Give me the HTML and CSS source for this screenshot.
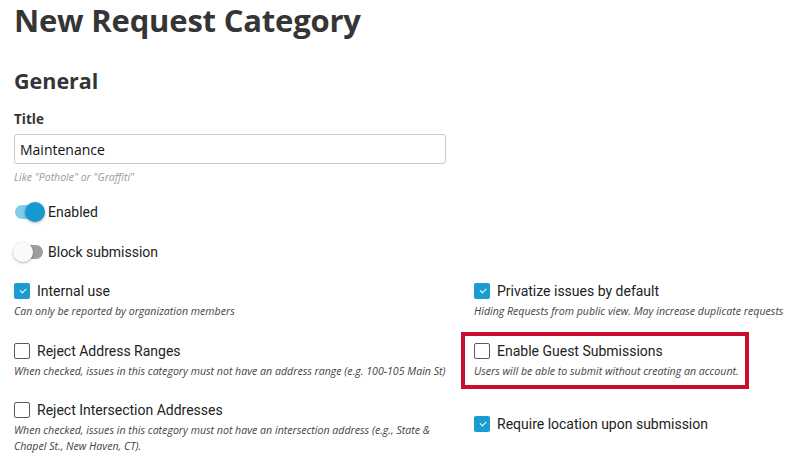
FILE: index.html
```html
<!DOCTYPE html>
<html lang="en">
<head>
<meta charset="utf-8">
<title>New Request Category</title>
<link rel="stylesheet" href="styles.css">
</head>
<body>
<main class="page">
  <h1 class="page-title">New Request Category</h1>
  <h2 class="section-title">General</h2>

  <div class="field">
    <label class="field-label" for="title">Title</label>
    <input id="title" class="text-input" type="text" value="Maintenance">
    <p class="field-hint">Like "Pothole" or "Graffiti"</p>
  </div>

  <div class="switch-row first">
    <span class="switch on"><span class="track"></span><span class="thumb"></span></span>
    <span class="switch-label">Enabled</span>
  </div>
  <div class="switch-row">
    <span class="switch"><span class="track"></span><span class="thumb"></span></span>
    <span class="switch-label">Block submission</span>
  </div>

  <div class="options">
    <div class="col col-left">
      <div class="option">
        <div class="check-row"><span class="box checked"></span><span class="check-label">Internal use</span></div>
        <p class="help">Can only be reported by organization members</p>
      </div>
      <div class="option">
        <div class="check-row"><span class="box"></span><span class="check-label">Reject Address Ranges</span></div>
        <p class="help">When checked, issues in this category must not have an address range (e.g. 100-105 Main St)</p>
      </div>
      <div class="option">
        <div class="check-row"><span class="box"></span><span class="check-label">Reject Intersection Addresses</span></div>
        <p class="help narrow">When checked, issues in this category must not have an intersection address (e.g., State &amp; Chapel St., New Haven, CT).</p>
      </div>
    </div>
    <div class="col col-right">
      <div class="option">
        <div class="check-row"><span class="box checked"></span><span class="check-label">Privatize issues by default</span></div>
        <p class="help">Hiding Requests from public view. May increase duplicate requests</p>
      </div>
      <div class="option highlighted">
        <div class="check-row"><span class="box"></span><span class="check-label">Enable Guest Submissions</span></div>
        <p class="help">Users will be able to submit without creating an account.</p>
      </div>
      <div class="option spaced">
        <div class="check-row"><span class="box checked"></span><span class="check-label">Require location upon submission</span></div>
      </div>
    </div>
  </div>
</main>
</body>
</html>
```
FILE: styles.css
```css
* { box-sizing: border-box; }
html, body { margin: 0; padding: 0; background: #fff; }
body { font-family: "Open Sans", "Noto Sans", sans-serif; color: #333; }

.page { padding: 0 14px; width: 801px; }

.page-title {
  margin: 0;
  font-size: 31px;
  line-height: 40px;
  font-weight: 700;
  color: #353535;
  letter-spacing: -0.2px;
}

.section-title {
  margin: 26px 0 0;
  font-size: 21.5px;
  line-height: 30px;
  font-weight: 700;
  color: #353535;
}

.field { margin-top: 13px; }
.field-label {
  display: block;
  font-size: 13.5px;
  line-height: 20px;
  font-weight: 700;
  color: #333;
}
.text-input {
  display: block;
  margin-top: 5px;
  width: 432px;
  height: 30px;
  border: 1px solid #c9c9cf;
  border-radius: 3px;
  padding: 0 5px;
  font-family: "Open Sans", sans-serif;
  font-size: 14px;
  color: #111;
  background: #fff;
}
.field-hint {
  margin: 6px 0 0;
  font-size: 10.5px;
  line-height: 15px;
  font-style: italic;
  color: #9a9a9a;
}

.switch-row { display: flex; align-items: center; height: 24px; margin-top: 16px; }
.switch-row.first { margin-top: 15px; }
.switch { position: relative; width: 34px; height: 24px; flex: none; }
.switch .track {
  position: absolute; left: 1px; top: 5px;
  width: 28px; height: 14px; border-radius: 7px;
  background: #9e9e9e;
}
.switch .thumb {
  position: absolute; left: -1px; top: 2px;
  width: 20px; height: 20px; border-radius: 50%;
  background: #fafafa;
  box-shadow: 0 1px 3px rgba(0,0,0,0.3);
}
.switch.on .track { background: #7fcbe8; }
.switch.on .thumb { left: 11px; background: #1798cf; }
.switch-label {
  font-family: Roboto, "Liberation Sans", sans-serif;
  font-size: 14px;
  color: #222;
}

.options { display: flex; margin-top: 17px; }
.col { display: flex; flex-direction: column; }
.col-left { width: 448px; flex: none; }
.col-right { margin-left: 12px; flex: 1; }

.option { position: relative; margin-bottom: 21px; }
.option.spaced { margin-top: 14px; }
.check-row { display: flex; align-items: center; height: 20px; }
.box {
  width: 16px; height: 16px; flex: none;
  border: 1.5px solid #5a5a5a; border-radius: 2px;
  background: #fff;
  position: relative;
}
.box.checked { border: none; background: #1a9bd2; }
.box.checked::after {
  content: "";
  position: absolute; left: 5.5px; top: 4.5px;
  width: 5px; height: 2.5px;
  border-left: 1.5px solid #fff; border-bottom: 1.5px solid #fff;
  transform: rotate(-45deg);
}
.check-label {
  margin-left: 7px;
  font-family: Roboto, "Liberation Sans", sans-serif;
  font-size: 14px;
  color: #222;
}
.help {
  margin: 3px 0 0;
  font-size: 10.6px;
  line-height: 15.5px;
  font-style: italic;
  color: #444;
}
.help.narrow { max-width: 420px; }

.highlighted::before {
  content: "";
  position: absolute;
  top: -9px; left: -13px; right: 38px; bottom: -10px;
  border: 4px solid #c8102e;
  pointer-events: none;
}
```
